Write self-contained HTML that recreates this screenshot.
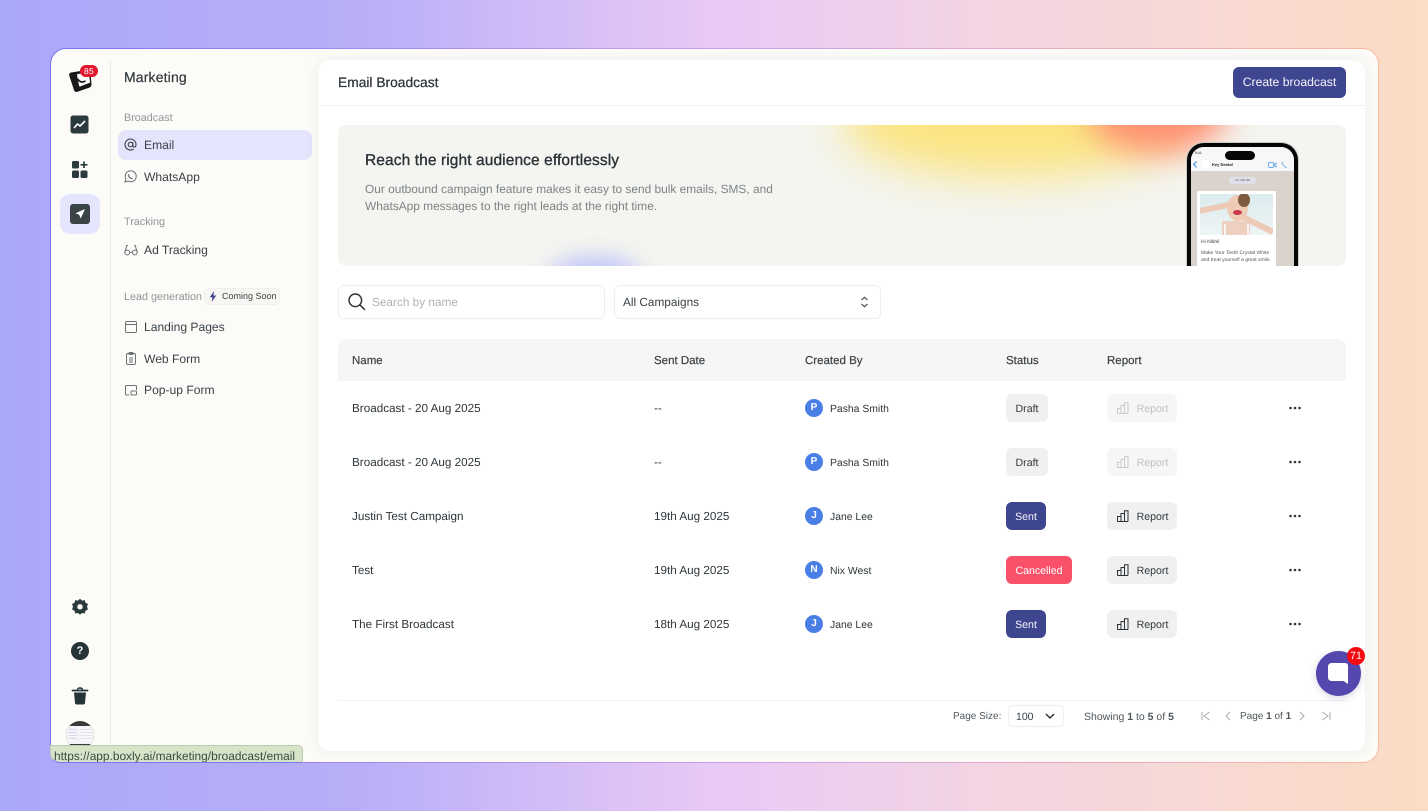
<!DOCTYPE html>
<html><head><meta charset="utf-8"><style>
*{box-sizing:border-box}
html,body{margin:0;padding:0;width:1428px;height:811px;overflow:hidden;font-family:"Liberation Sans",sans-serif;color:#2b3338;text-rendering:geometricPrecision}
body{position:relative;background:linear-gradient(90deg,#aaa8fb 0%,#b8aef8 25%,#e9c9f6 50%,#f3d5e2 70%,#fbdcc4 100%)}
.a{position:absolute;white-space:nowrap}
#frame{position:absolute;left:50px;top:48px;width:1329px;height:715px;border-radius:16px;padding:1px;background:linear-gradient(90deg,#7a74f0,#c9a0ee 50%,#fdb9a0)}
#in{position:absolute;left:1px;top:1px;right:1px;bottom:1px;border-radius:15px;background:#fcfbf8;overflow:hidden}
#main{position:absolute;left:318px;top:60px;width:1047px;height:691px;background:#fff;border-radius:12px;box-shadow:0 0 14px rgba(60,50,30,.07)}
.s{font-size:10.800px;color:#8f9599}
.n{font-size:12.100px;color:#3a4247}
.t{font-size:11.700px;color:#2e363b}
.th{font-size:11.500px;color:#3a4146;-webkit-text-stroke:.2px #3a4146}
.c{font-size:10.400px;color:#30383c}
.pill{position:absolute;height:28px;border-radius:6px;font-size:10.600px;line-height:31px;text-align:center}
.av{position:absolute;width:18px;height:18px;border-radius:50%;background:#4a7fe6;color:#fff;font-size:10px;font-weight:bold;line-height:18px;text-align:center}
.p{font-size:10px;color:#50575c}
svg{position:absolute;overflow:visible}
</style></head><body>
<div id="frame"><div id="in"></div></div>

<div class="a" style="left:110px;top:60px;width:1px;height:690px;background:#eeedea"></div>
<svg style="left:68px;top:68px" width="25" height="25" viewBox="0 0 25 25"><path d="M3 4.500 L19 2 Q22 1.800 22.500 4.500 L23.500 16.500 Q23.500 19 21 19.800 L9.500 23.800 Q6.800 24.500 6 22 L1.200 7.500 Q.8 5 3 4.500Z" fill="#17191a"/><path d="M10 7 L20 5.500 L21 14 L12 17.500Z" fill="#fcfbf8" stroke="#fcfbf8" stroke-width="2" stroke-linejoin="round"/><path d="M10 11.500 Q13 15.500 17 13.200" fill="none" stroke="#17191a" stroke-width="1.600" stroke-linecap="round"/></svg>
<div class="a" style="left:80px;top:65px;width:18px;height:12px;border-radius:6px;background:#e3182d;color:#fff;font-size:8.500px;line-height:12px;text-align:center;letter-spacing:.3px">85</div>
<svg style="left:70px;top:115px" width="20" height="20" viewBox="0 0 20 20"><rect x=".5" y=".5" width="18" height="18" rx="2.500" fill="#2b3a3d"/><path d="M4 13 L7.500 9 L10 11 L15 6" fill="none" stroke="#fff" stroke-width="1.600" stroke-linejoin="round"/></svg>
<svg style="left:71px;top:161px" width="18" height="18" viewBox="0 0 18 18"><rect x="1" y="0" width="7" height="7.500" rx="1.500" fill="#2b3a3d"/><rect x="1" y="9.500" width="7" height="7.500" rx="1.500" fill="#2b3a3d"/><rect x="9.500" y="9.500" width="7" height="7.500" rx="1.500" fill="#2b3a3d"/><path d="M13 .5v6.500M9.500 3.800h7" stroke="#2b3a3d" stroke-width="1.700"/></svg>
<div class="a" style="left:60px;top:194px;width:40px;height:40px;border-radius:10px;background:#e5e5fd"></div>
<svg style="left:70px;top:204px" width="20" height="20" viewBox="0 0 20 20"><rect width="20" height="20" rx="3" fill="#3a4447"/><path d="M15 5 L5.500 9.300 L9.200 10.800 L10.700 14.500Z" fill="#fff"/></svg>
<svg style="left:71px;top:598px" width="18" height="18" viewBox="0 0 18 18"><path d="M9 .8 L11 2.600 L13.700 2.100 L14.500 4.700 L17 6 L16 8.700 L17 11.400 L14.500 12.700 L13.700 15.500 L11 15 L9 16.800 L7 15 L4.300 15.500 L3.500 12.700 L1 11.400 L2 8.700 L1 6 L3.500 4.700 L4.300 2.100 L7 2.600Z" fill="#2b3a3d"/><circle cx="9" cy="8.800" r="2.700" fill="#fcfbf8"/></svg>
<svg style="left:71px;top:642px" width="18" height="18" viewBox="0 0 18 18"><circle cx="9" cy="9" r="9" fill="#253438"/></svg>
<div class="a" style="left:71px;top:642px;width:18px;text-align:center;color:#fff;font-size:11px;font-weight:bold;line-height:18px">?</div>
<svg style="left:71px;top:687px" width="18" height="18" viewBox="0 0 18 18"><path d="M1.500 3.500h15" stroke="#253438" stroke-width="1.800" stroke-linecap="round"/><path d="M6.500 3 Q6.500 1 9 1 Q11.500 1 11.500 3" fill="none" stroke="#253438" stroke-width="1.400"/><path d="M3 5.500h12l-1 10.500q-.2 1.500-1.700 1.500H5.700q-1.500 0-1.700-1.500Z" fill="#253438"/></svg>
<div class="a" style="left:66px;top:721px;width:28px;height:28px;border-radius:50%;background:#3a3a3b;overflow:hidden"><div class="a" style="left:0;top:5px;width:28px;height:18px;background:#f4f4f8"></div><div class="a" style="left:3px;top:8px;width:8px;height:12px;background:repeating-linear-gradient(180deg,#d3d6ee 0 1px,#f4f4f8 1px 3px)"></div><div class="a" style="left:14px;top:8px;width:12px;height:12px;background:repeating-linear-gradient(180deg,#e0e1ea 0 1px,#f8f8fa 1px 3px)"></div></div>

<div class="a" style="left:124px;top:69px;font-size:14px;letter-spacing:.15px;color:#2f373c;-webkit-text-stroke:.2px #2f373c">Marketing</div>
<div class="a s" style="left:124px;top:112px">Broadcast</div>
<div class="a" style="left:118px;top:130px;width:194px;height:30px;border-radius:8px;background:#e4e4fc"></div>
<svg style="left:124px;top:138px" width="13" height="13" viewBox="0 0 13 13" fill="none" stroke="#3a4247" stroke-width="1.100"><circle cx="6.500" cy="6.500" r="2.300"/><path d="M8.800 4.200v3.300q0 1.500 1.500 1.500 1.700 0 1.700-2.500a5.500 5.500 0 1 0-2.300 4.500"/></svg>
<div class="a n" style="left:144px;top:138px">Email</div>
<svg style="left:124px;top:170px" width="13" height="13" viewBox="0 0 13 13" fill="none" stroke="#6b7276" stroke-width="1"><path d="M1 12 L1.900 8.900 A5.500 5.500 0 1 1 4.100 11.100Z"/><path d="M4.500 4.300 Q4.500 8.500 8.700 8.700" stroke-width="1.300"/></svg>
<div class="a n" style="left:144px;top:170px">WhatsApp</div>
<div class="a s" style="left:124px;top:216px">Tracking</div>
<svg style="left:124px;top:243px" width="14" height="14" viewBox="0 0 14 14" fill="none" stroke="#6b7276" stroke-width="1"><circle cx="3.200" cy="9.500" r="2.400"/><circle cx="10.800" cy="9.500" r="2.400"/><path d="M5.600 9.300h2.800M.8 9.500 L2.800 2.500H4M13.200 9.500 L11.200 2.500H10"/></svg>
<div class="a n" style="left:144px;top:243px">Ad Tracking</div>
<div class="a s" style="left:124px;top:291px">Lead generation</div>
<div class="a" style="left:204px;top:288px;width:76px;height:17px;border-radius:6px;background:#f7f6f3;border:1px solid #f0efec"></div>
<svg style="left:209px;top:291px" width="8" height="11" viewBox="0 0 8 11"><path d="M5 0 L.8 6.200H3.500L2.800 11 L7.200 4.500H4.400Z" fill="#3e4490"/></svg>
<div class="a" style="left:222px;top:291px;font-size:9px;color:#3a4247">Coming Soon</div>
<svg style="left:125px;top:321px" width="12" height="12" viewBox="0 0 12 12" fill="none" stroke="#6b7276" stroke-width="1"><rect x=".5" y=".5" width="11" height="11" rx="1.500"/><path d="M.5 3.500h11"/></svg>
<div class="a n" style="left:144px;top:320px">Landing Pages</div>
<svg style="left:125px;top:352px" width="12" height="13" viewBox="0 0 12 13" fill="none" stroke="#6b7276" stroke-width="1"><rect x="1.500" y="1.500" width="9" height="11" rx="1.500"/><rect x="4" y=".5" width="4" height="2" rx=".5"/><path d="M4 6h4M4 8h4M4 10h4"/></svg>
<div class="a n" style="left:144px;top:352px">Web Form</div>
<svg style="left:125px;top:385px" width="12" height="11" viewBox="0 0 12 11" fill="none" stroke="#6b7276" stroke-width="1"><path d="M4.500 10H1.500Q.5 10 .5 9V1.500Q.5.500 1.500.5h9q1 0 1 1V5"/><rect x="6" y="6" width="5.500" height="4" rx="1"/></svg>
<div class="a n" style="left:144px;top:383px">Pop-up Form</div>

<div class="a" style="left:50px;top:745px;width:253px;height:18px;background:#d6e5c9;border:1px solid #bccbb0;border-bottom:1px solid #7d78ef;border-radius:0 5px 0 10px;font-size:11.900px;color:#3c4a3f;line-height:20px;padding-left:3px;overflow:hidden">https://app.boxly.ai/marketing/broadcast/email</div>

<div id="main"></div>
<div class="a" style="left:338px;top:75px;font-size:13.800px;color:#2b3338;-webkit-text-stroke:.25px #2b3338">Email Broadcast</div>
<div class="a" style="left:1233px;top:67px;width:113px;height:31px;border-radius:6px;background:#3f4690;color:#f3f3fa;font-size:12.200px;line-height:31px;text-align:center">Create broadcast</div>
<div class="a" style="left:318px;top:105px;width:1047px;height:1px;background:#f1f1ef"></div>

<div class="a" style="left:338px;top:125px;width:1008px;height:141px;border-radius:8px;background:#f4f5f0;overflow:hidden">
 <div class="a" style="left:505px;top:-60px;width:340px;height:112px;border-radius:50%;background:#fbe480;filter:blur(22px)"></div>
 <div class="a" style="left:750px;top:-62px;width:140px;height:90px;border-radius:50%;background:#ff8f72;filter:blur(16px)"></div>
 <div class="a" style="left:212px;top:132px;width:90px;height:36px;border-radius:50%;background:#bfc2fb;filter:blur(11px)"></div>
 <div class="a" style="left:849px;top:18px;width:111px;height:140px;border-radius:17px;background:#060606;box-shadow:0 0 0 1px #c9c9c6"></div>
 <div class="a" style="left:853px;top:22px;width:103px;height:130px;border-radius:13px;background:#d9d3cb;overflow:hidden">
  <div class="a" style="left:0;top:0;width:103px;height:24px;background:#f7f7f7"></div>
  <div class="a" style="left:34px;top:4px;width:30px;height:9px;border-radius:5px;background:#07070a"></div>
  <div class="a" style="left:4px;top:4px;font-size:3.500px;color:#222">9:41</div>
  <div class="a" style="left:10px;top:13px;width:9px;height:9px;border-radius:50%;background:#fff"></div>
  <div class="a" style="left:21px;top:15px;font-size:4px;font-weight:bold;color:#222">Key Dental</div>
  <div class="a" style="left:38px;top:30px;width:27px;height:7px;border-radius:3px;background:#e0e0ea;font-size:3px;line-height:7px;text-align:center;color:#444">Fri, Nov 30</div>
  <svg style="left:2px;top:14px" width="4" height="7" viewBox="0 0 4 7"><path d="M3.500 .5 L.7 3.500 L3.500 6.500" fill="none" stroke="#3c8cf0" stroke-width="1.100"/></svg>
  <svg style="left:77px;top:14px" width="21" height="8" viewBox="0 0 21 8" fill="none" stroke="#6fa8ef" stroke-width=".9"><rect x=".5" y="1.500" width="5" height="5" rx="1"/><path d="M5.500 4 L8 2v4Z"/><path d="M14 .8 Q14.500 5 19 7"/></svg>
  <div class="a" style="left:6px;top:44px;width:79px;height:100px;border-radius:2px;background:#fff"></div>
  <div class="a" style="left:9px;top:47px;width:73px;height:41px;background:linear-gradient(180deg,#dcebee,#eef5f5);overflow:hidden">
   <div class="a" style="left:22px;top:27px;width:28px;height:15px;background:#edd0bf"></div>
   <div class="a" style="left:27px;top:1px;width:21px;height:26px;border-radius:50%;background:#efcbb6"></div>
   <div class="a" style="left:38px;top:-1px;width:12px;height:14px;border-radius:50%;background:#7d5a3e"></div>
   <div class="a" style="left:33px;top:16px;width:9px;height:5px;border-radius:50%;background:#c8384f"></div>
   <svg style="left:0;top:0" width="73" height="41" viewBox="0 0 73 41" fill="none" stroke="#eccab5" stroke-width="6"><path d="M0 17 L28 11M73 38 L43 23"/></svg>
   <svg style="left:0;top:0" width="73" height="41" viewBox="0 0 73 41" fill="none" stroke="#fff" stroke-width="1.500"><path d="M25 30v11M48 30v11"/></svg>
  </div>
  <div class="a" style="left:10px;top:92px;font-size:5px;color:#444">Hi Nikhil</div>
  <div class="a" style="left:10px;top:103px;font-size:5px;line-height:6.500px;color:#555">Make Your Teeth Crystal White<br>and treat yourself a great smile.</div>
 </div>
</div>
<div class="a" style="left:365px;top:152px;font-size:15.500px;letter-spacing:.1px;color:#2b3338;-webkit-text-stroke:.35px #2b3338">Reach the right audience effortlessly</div>
<div class="a" style="left:365px;top:181px;font-size:11.900px;line-height:17px;color:#7c8285">Our outbound campaign feature makes it easy to send bulk emails, SMS, and<br>WhatsApp messages to the right leads at the right time.</div>

<div class="a" style="left:338px;top:285px;width:267px;height:34px;border:1px solid #eeeeec;border-radius:6px;background:#fff"></div>
<svg style="left:348px;top:293px" width="18" height="18" viewBox="0 0 18 18" fill="none" stroke="#2b3338" stroke-width="1.500"><circle cx="7.300" cy="7.300" r="6.300"/><path d="M12 12 L16.800 16.800"/></svg>
<div class="a" style="left:372px;top:295px;font-size:11.800px;color:#aeb2b8">Search by name</div>
<div class="a" style="left:614px;top:285px;width:267px;height:34px;border:1px solid #eeeeec;border-radius:6px;background:#fff"></div>
<div class="a" style="left:623px;top:295px;font-size:11.800px;color:#3a4247">All Campaigns</div>
<svg style="left:860px;top:296px" width="9" height="12" viewBox="0 0 9 12" fill="none" stroke="#3a4247" stroke-width="1.100"><path d="M1.500 4 L4.500 1.200 L7.500 4M1.500 8 L4.500 10.800 L7.500 8"/></svg>

<div class="a" style="left:338px;top:339px;width:1008px;height:42px;background:#f6f6f6;border-radius:8px 8px 0 0"></div>
<div class="a th" style="left:352px;top:355px">Name</div>
<div class="a th" style="left:654px;top:355px">Sent Date</div>
<div class="a th" style="left:805px;top:355px">Created By</div>
<div class="a th" style="left:1006px;top:355px">Status</div>
<div class="a th" style="left:1107px;top:355px">Report</div>

<div class="a t" style="left:352px;top:402px">Broadcast - 20 Aug 2025</div>
<div class="a t" style="left:654px;top:402px">--</div>
<div class="av" style="left:805px;top:399px">P</div>
<div class="a c" style="left:830px;top:404px">Pasha Smith</div>
<div class="pill" style="left:1006px;top:394px;width:42px;background:#f0f0f0;color:#30383c">Draft</div>
<div class="pill" style="left:1107px;top:394px;width:70px;background:#f6f6f6;color:#bfc1c2;padding-left:21px">Report</div>
<svg style="left:1117px;top:402px" width="12" height="12" viewBox="0 0 12 12" fill="none" stroke="#c9cbcc" stroke-width="1"><path d="M.5 11.500V6.500h3.500v5M4 11.500V3.500h3.500v8M7.500 11.500V.8h3.500v10.700M.5 11.500h10.500"/></svg>
<svg style="left:1289px;top:406px" width="12" height="4" viewBox="0 0 12 4" fill="#30383c"><circle cx="1.500" cy="2" r="1.300"/><circle cx="6" cy="2" r="1.300"/><circle cx="10.500" cy="2" r="1.300"/></svg>

<div class="a t" style="left:352px;top:456px">Broadcast - 20 Aug 2025</div>
<div class="a t" style="left:654px;top:456px">--</div>
<div class="av" style="left:805px;top:453px">P</div>
<div class="a c" style="left:830px;top:458px">Pasha Smith</div>
<div class="pill" style="left:1006px;top:448px;width:42px;background:#f0f0f0;color:#30383c">Draft</div>
<div class="pill" style="left:1107px;top:448px;width:70px;background:#f6f6f6;color:#bfc1c2;padding-left:21px">Report</div>
<svg style="left:1117px;top:456px" width="12" height="12" viewBox="0 0 12 12" fill="none" stroke="#c9cbcc" stroke-width="1"><path d="M.5 11.500V6.500h3.500v5M4 11.500V3.500h3.500v8M7.500 11.500V.8h3.500v10.700M.5 11.500h10.500"/></svg>
<svg style="left:1289px;top:460px" width="12" height="4" viewBox="0 0 12 4" fill="#30383c"><circle cx="1.500" cy="2" r="1.300"/><circle cx="6" cy="2" r="1.300"/><circle cx="10.500" cy="2" r="1.300"/></svg>

<div class="a t" style="left:352px;top:510px">Justin Test Campaign</div>
<div class="a t" style="left:654px;top:510px">19th Aug 2025</div>
<div class="av" style="left:805px;top:507px">J</div>
<div class="a c" style="left:830px;top:512px">Jane Lee</div>
<div class="pill" style="left:1006px;top:502px;width:40px;background:#3f4690;color:#f3f3fa">Sent</div>
<div class="pill" style="left:1107px;top:502px;width:70px;background:#f0f0f0;color:#30383c;padding-left:21px">Report</div>
<svg style="left:1117px;top:510px" width="12" height="12" viewBox="0 0 12 12" fill="none" stroke="#2b3338" stroke-width="1"><path d="M.5 11.500V6.500h3.500v5M4 11.500V3.500h3.500v8M7.500 11.500V.8h3.500v10.700M.5 11.500h10.500"/></svg>
<svg style="left:1289px;top:514px" width="12" height="4" viewBox="0 0 12 4" fill="#30383c"><circle cx="1.500" cy="2" r="1.300"/><circle cx="6" cy="2" r="1.300"/><circle cx="10.500" cy="2" r="1.300"/></svg>

<div class="a t" style="left:352px;top:564px">Test</div>
<div class="a t" style="left:654px;top:564px">19th Aug 2025</div>
<div class="av" style="left:805px;top:561px">N</div>
<div class="a c" style="left:830px;top:566px">Nix West</div>
<div class="pill" style="left:1006px;top:556px;width:66px;background:#f9516a;color:#fff">Cancelled</div>
<div class="pill" style="left:1107px;top:556px;width:70px;background:#f0f0f0;color:#30383c;padding-left:21px">Report</div>
<svg style="left:1117px;top:564px" width="12" height="12" viewBox="0 0 12 12" fill="none" stroke="#2b3338" stroke-width="1"><path d="M.5 11.500V6.500h3.500v5M4 11.500V3.500h3.500v8M7.500 11.500V.8h3.500v10.700M.5 11.500h10.500"/></svg>
<svg style="left:1289px;top:568px" width="12" height="4" viewBox="0 0 12 4" fill="#30383c"><circle cx="1.500" cy="2" r="1.300"/><circle cx="6" cy="2" r="1.300"/><circle cx="10.500" cy="2" r="1.300"/></svg>

<div class="a t" style="left:352px;top:618px">The First Broadcast</div>
<div class="a t" style="left:654px;top:618px">18th Aug 2025</div>
<div class="av" style="left:805px;top:615px">J</div>
<div class="a c" style="left:830px;top:620px">Jane Lee</div>
<div class="pill" style="left:1006px;top:610px;width:40px;background:#3f4690;color:#f3f3fa">Sent</div>
<div class="pill" style="left:1107px;top:610px;width:70px;background:#f0f0f0;color:#30383c;padding-left:21px">Report</div>
<svg style="left:1117px;top:618px" width="12" height="12" viewBox="0 0 12 12" fill="none" stroke="#2b3338" stroke-width="1"><path d="M.5 11.500V6.500h3.500v5M4 11.500V3.500h3.500v8M7.500 11.500V.8h3.500v10.700M.5 11.500h10.500"/></svg>
<svg style="left:1289px;top:622px" width="12" height="4" viewBox="0 0 12 4" fill="#30383c"><circle cx="1.500" cy="2" r="1.300"/><circle cx="6" cy="2" r="1.300"/><circle cx="10.500" cy="2" r="1.300"/></svg>

<div class="a" style="left:338px;top:700px;width:1008px;height:1px;background:#f3f3f2"></div>
<div class="a p" style="left:953px;top:711px">Page Size:</div>
<div class="a" style="left:1008px;top:705px;width:56px;height:22px;border:1px solid #eeeeec;border-radius:6px"></div>
<div class="a p" style="left:1016px;top:711px;color:#3a4247;font-size:10.500px">100</div>
<svg style="left:1045px;top:713px" width="10" height="6" viewBox="0 0 10 6" fill="none" stroke="#2b3338" stroke-width="1.500"><path d="M1 1 L5 5 L9 1"/></svg>
<div class="a p" style="left:1084px;top:711px;font-size:10.500px">Showing <b>1</b> to <b>5</b> of <b>5</b></div>
<svg style="left:1201px;top:711px" width="10" height="10" viewBox="0 0 10 10" fill="none" stroke="#a8acaf" stroke-width="1"><path d="M1 1v8M8.500 1 L3 5 L8.500 9"/></svg>
<svg style="left:1225px;top:711px" width="6" height="10" viewBox="0 0 6 10" fill="none" stroke="#a8acaf" stroke-width="1"><path d="M5 1 L1 5 L5 9"/></svg>
<div class="a p" style="left:1240px;top:711px">Page <b>1</b> of <b>1</b></div>
<svg style="left:1299px;top:711px" width="6" height="10" viewBox="0 0 6 10" fill="none" stroke="#a8acaf" stroke-width="1"><path d="M1 1 L5 5 L1 9"/></svg>
<svg style="left:1321px;top:711px" width="10" height="10" viewBox="0 0 10 10" fill="none" stroke="#a8acaf" stroke-width="1"><path d="M9 1v8M1.500 1 L7 5 L1.500 9"/></svg>

<div class="a" style="left:1316px;top:651px;width:45px;height:45px;border-radius:50%;background:#5447ad;box-shadow:0 2px 8px rgba(60,50,120,.2)"></div>
<svg style="left:1328px;top:663px" width="21" height="21" viewBox="0 0 21 21"><path d="M4 0h13q3 0 3 3v18l-4.500-3H4q-4 0-4-4V4q0-4 4-4Z" fill="#fff"/></svg>
<div class="a" style="left:1347px;top:647px;width:18px;height:18px;border-radius:50%;background:#f50a12;color:#fff;font-size:10.500px;line-height:18px;text-align:center">71</div>
</body></html>
